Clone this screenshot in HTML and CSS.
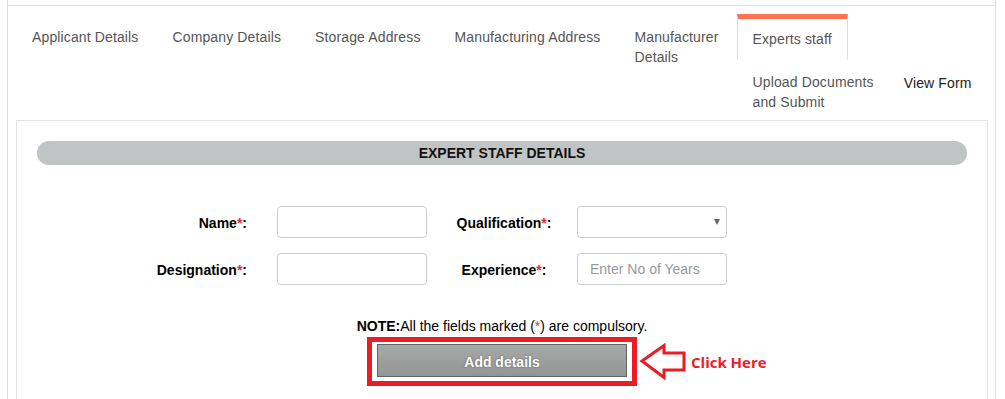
FILE: index.html
```html
<!DOCTYPE html>
<html>
<head>
    <title>Expert Staff Details</title>
    <link rel="stylesheet" href="styles.css">
</head>
<body>
    <div class="wrap">
        <div class="topline"></div>
        <ul class="tabs">
            <li><a href="#">Applicant Details</a></li>
            <li><a href="#">Company Details</a></li>
            <li><a href="#">Storage Address</a></li>
            <li><a href="#">Manufacturing Address</a></li>
            <li><a href="#">Manufacturer<br>Details</a></li>
            <li class="active"><a href="#">Experts staff</a></li>
            <li><a href="#">Upload Documents<br>and Submit</a></li>
            <li class="view"><a href="#">View Form</a></li>
        </ul>
        <div class="panel">
            <div class="bar">EXPERT STAFF DETAILS</div>
            <form class="staff-form" onsubmit="return false;">
                <label class="lbl-left" for="name">Name<span class="req">*</span>:</label>
                <input type="text" id="name" class="field">
                <label class="lbl-right" for="qual">Qualification<span class="req">*</span>:</label>
                <div class="select-wrap">
                    <select id="qual" class="field">
                        <option value=""></option>
                    </select>
                </div>
                <label class="lbl-left" for="desig">Designation<span class="req">*</span>:</label>
                <input type="text" id="desig" class="field">
                <label class="lbl-right" for="exp">Experience<span class="req">*</span>:</label>
                <input type="text" id="exp" class="field" placeholder="Enter No of Years">
            </form>
            <p class="note"><b>NOTE:</b>All the fields marked (<span class="req">*</span>) are compulsory.</p>
            <div class="btn-row">
                <div class="highlight">
                    <button type="button" class="add-btn">Add details</button>
                    <div class="hint">
                        <svg width="48" height="38" viewBox="0 0 48 38">
                            <path d="M3 18 L25 2.5 L25 10 L45 10 L45 27 L25 27 L25 34.5 Z" fill="#fff" stroke="#ed1c24" stroke-width="3" stroke-linejoin="miter"/>
                        </svg>
                        <span>Click Here</span>
                    </div>
                </div>
            </div>
        </div>
    </div>
</body>
</html>
```

FILE: styles.css
```css
:root {
    --line: #dedede;
    --panel-line: #e3e4e8;
    --tab-text: #555;
    --orange: #ff7352;
    --red: #ed1c24;
}
html, body { overflow: hidden; }
body { margin: 0; font-family: 'Liberation Sans', Arial, sans-serif; font-size: 14px; line-height: 20px; color: #000; background: #fff; }
.wrap { margin-left: 7px; width: 989px; box-sizing: border-box; border-left: 1px solid var(--line); border-right: 1px solid var(--line); padding: 0 7px 0 8px; }
.topline { height: 5px; border-bottom: 1px solid var(--line); margin: 0 -7px 0 -8px; }

/* tabs */
.tabs { list-style: none; margin: 8px 0 0; padding: 0; }
.tabs::after { content: ""; display: block; clear: both; }
.tabs li { float: left; margin-bottom: -1px; }
.tabs a { display: block; padding: 12px 15px 8px; margin-right: 2px; border: 1px solid transparent; color: var(--tab-text); text-decoration: none; letter-spacing: 0.13px; }
.tabs .active a { padding: 10px 15px; border-color: var(--line) var(--line) transparent; border-top: 5px solid var(--orange); background: #fff; }
.tabs .view a { padding: 14px 0 0 12px; border: none; color: #222; }

/* panel */
.panel { border: 1px solid var(--panel-line); border-bottom: none; padding: 20px 20px 60px; }
.bar { height: 24px; line-height: 25px; background: #c1c4c4; border-radius: 12px; text-align: center; font-weight: bold; color: #111; }

.staff-form { display: grid; grid-template-columns: 150px 150px 150px 150px; row-gap: 15px; margin: 41px 0 0 90px; }
.lbl-left, .lbl-right { font-weight: bold; align-self: center; padding-top: 2px; }
.lbl-left { text-align: right; padding-right: 30px; }
.lbl-right { text-align: center; padding-left: 4px; }
.req { color: #f0262e; font-weight: normal; }
.lbl-left .req, .lbl-right .req { font-weight: bold; }
.field { box-sizing: border-box; width: 150px; height: 32px; border: 1px solid #ccc; border-radius: 4px; padding: 0 12px; font: 14px 'Liberation Sans', Arial, sans-serif; color: #555; background: #fff; margin: 0; }
.field::placeholder { color: #999; }
.select-wrap { position: relative; }
.select-wrap select { appearance: none; -webkit-appearance: none; }
.select-wrap::after { content: ""; position: absolute; right: 7px; top: 13px; border-left: 3.5px solid transparent; border-right: 3.5px solid transparent; border-top: 6px solid #666; pointer-events: none; }

.note { margin: 30px 0 0; padding-top: 1px; text-align: center; }
.btn-row { display: flex; justify-content: center; margin-top: 1px; }
.highlight { position: relative; border: 5px solid var(--red); padding: 2px 5px 4px; }
.add-btn { display: block; width: 250px; height: 33px; border: 1px solid #5b6762; background: linear-gradient(#a6a9a7, #939694); color: #fff; font: bold 14px 'Liberation Sans', Arial, sans-serif; text-shadow: 0 0 2px rgba(0, 0, 0, .45); cursor: pointer; padding: 2px 0 0; }
.hint { position: absolute; left: 267px; top: 1px; display: flex; align-items: center; gap: 4px; }
.hint svg { display: block; }
.hint span { color: var(--red); font: bold 15px 'Open Sans', sans-serif; white-space: nowrap; }
```
